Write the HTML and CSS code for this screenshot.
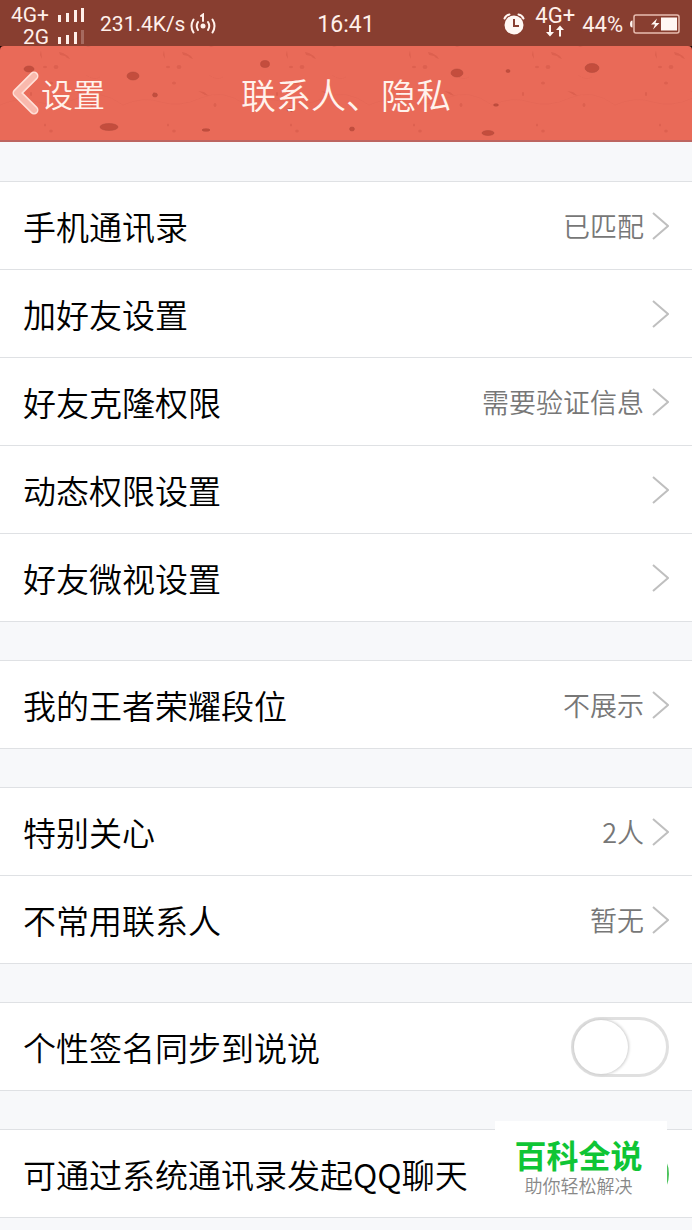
FILE: index.html
```
<!DOCTYPE html>
<html lang="zh-CN">
<head>
    <meta charset="UTF-8">
    <meta name="viewport" content="width=device-width, initial-scale=1.0">
    <title>联系人、隐私</title>
    <link rel="stylesheet" href="styles.css">
</head>
<body>
    <!-- Status bar -->
    <div class="status-bar">
        <div class="status-left">
            <div class="sims">
                <div class="sim">4G+
                    <svg class="signal" width="26" height="14" viewBox="0 0 26 14" fill="#fff0ea"><path d="M0 7h3v7H0zM8 5h3v9H8zM16 2h3v12h-3zM23 0h3v14h-3z"/></svg>
                </div>
                <div class="sim">2G
                    <svg class="signal" width="26" height="14" viewBox="0 0 26 14" fill="#fff0ea"><path d="M0 7h3v7H0zM8 5h3v9H8zM16 2h3v12h-3z"/><path opacity=".25" d="M23 0h3v14h-3z"/></svg>
                </div>
            </div>
            <span class="speed">231.4K/s</span>
            <svg class="hotspot" width="26" height="22" viewBox="0 0 26 22" fill="none" stroke="#fff0ea" stroke-width="2" stroke-linecap="round">
                <circle cx="13" cy="13" r="2.500" fill="#fff0ea" stroke="none"/>
                <path d="M11 3l2-1.500V8M8 9q-2.500 4 0 8M18 9q2.500 4 0 8M3.500 6.500q-4 6.500 0 13M22.500 6.500q4 6.500 0 13"/>
            </svg>
        </div>
        <span class="clock">16:41</span>
        <div class="status-right">
            <svg class="alarm" width="22" height="22" viewBox="0 0 22 22">
                <circle cx="11" cy="12" r="9.500" fill="#fff7f3"/>
                <path d="M1.500 5.500Q3 2 6.500 1.500M20.500 5.500Q19 2 15.500 1.500" fill="none" stroke="#fff7f3" stroke-width="2" stroke-linecap="round"/>
                <path d="M11 6v7h5" fill="none" stroke="#883e30" stroke-width="2"/>
            </svg>
            <div class="data">4G+
                <svg width="18" height="12" viewBox="0 0 18 12" fill="#fff7f3"><path d="M3 0h2v7h3l-4 4.500L0 7h3zM13 11.500h2V5h3l-4-4.500L10 5h3z"/></svg>
            </div>
            <span class="percent">44%</span>
            <svg class="battery" width="52" height="20" viewBox="0 0 52 20">
                <path d="M3.500 6.500Q1 6.500 1 10t2.500 3.500z" fill="#fff7f3"/>
                <rect x="5" y="1" width="45" height="18" rx="2" fill="none" stroke="#e8bdb0" stroke-width="1.500"/>
                <rect x="32" y="3.500" width="16" height="13" fill="#fff7f3"/>
                <path d="M28 4.500l-6 6h4l-2 5 6.500-6.500h-4z" fill="#fff7f3"/>
            </svg>
        </div>
    </div>

    <!-- Title bar -->
    <div class="title-wrap">
        <header class="title-bar">
            <svg class="texture" viewBox="0 0 692 96" preserveAspectRatio="xMidYMid slice" aria-hidden="true">
                <defs>
                    <pattern id="specks" width="123" height="96" patternUnits="userSpaceOnUse">
                        <g fill="#c94f3f" opacity=".4">
                            <ellipse cx="56" cy="22" rx="2.500" ry="2"/>
                            <ellipse cx="45" cy="22" rx="2" ry="1.200"/>
                            <ellipse cx="51" cy="38" rx="2" ry="1.500"/>
                            <ellipse cx="31" cy="49" rx="1.200" ry="2"/>
                            <ellipse cx="92" cy="60" rx="1.500" ry="2"/>
                            <ellipse cx="51" cy="86" rx="1.800" ry="1.500"/>
                            <ellipse cx="45" cy="80" rx="1" ry="1.500"/>
                            <path d="M59 7l4 1 5 3 2 3-3-1-2-2-5-1zM75 46l6 1 5 4-4-1-5-3zM86 1l8-1-6 2zM41 5l1 9-2-4z"/>
                        </g>
                        <path d="M0 60q20-9 38-3t40-4 45 7M86 30q8 6 14 2" fill="none" stroke="#d95b4a" opacity=".2"/>
                    </pattern>
                </defs>
                <rect width="692" height="96" fill="url(#specks)"/>
                <g fill="#c44d3d" stroke="#b04a3b" stroke-opacity=".5">
                    <ellipse cx="29" cy="24" rx="5" ry="3"/>
                    <ellipse cx="133" cy="31" rx="6" ry="4"/>
                    <ellipse cx="155" cy="50" rx="2.500" ry="2"/>
                    <ellipse cx="109" cy="82" rx="9" ry="3.500"/>
                    <ellipse cx="206" cy="85" rx="4" ry="1.300"/>
                    <ellipse cx="265" cy="19" rx="4.500" ry="3.500"/>
                    <ellipse cx="290" cy="65" rx="3" ry="1.500"/>
                    <ellipse cx="352" cy="84" rx="2.500" ry="2"/>
                    <ellipse cx="457" cy="28" rx="6" ry="4"/>
                    <ellipse cx="508" cy="26" rx="2" ry="1.500"/>
                    <ellipse cx="592" cy="23" rx="7" ry="4.500"/>
                    <ellipse cx="496" cy="60" rx="2.500" ry="1.200"/>
                    <ellipse cx="488" cy="88" rx="6" ry="2.500"/>
                </g>
            </svg>
            <a class="back" href="#">
                <svg width="28" height="44" viewBox="0 0 28 44" fill="none" stroke-linecap="round" stroke-linejoin="round">
                    <path d="M23 5L6 22l17 17" stroke="#ffe0d8" stroke-width="9"/>
                    <path d="M23 5L6 22l17 17" stroke="#f9b9ad" stroke-width="6"/>
                </svg>
                设置
            </a>
            <h1>联系人、隐私</h1>
        </header>
    </div>

    <main class="settings">
        <section class="group">
            <a class="row" href="#">手机通讯录<span class="value">已匹配</span><svg class="chevron" viewBox="0 0 17 28"><path d="M1 1l15 13L1 27"/></svg></a>
            <a class="row" href="#">加好友设置<svg class="chevron" viewBox="0 0 17 28"><path d="M1 1l15 13L1 27"/></svg></a>
            <a class="row" href="#">好友克隆权限<span class="value">需要验证信息</span><svg class="chevron" viewBox="0 0 17 28"><path d="M1 1l15 13L1 27"/></svg></a>
            <a class="row" href="#">动态权限设置<svg class="chevron" viewBox="0 0 17 28"><path d="M1 1l15 13L1 27"/></svg></a>
            <a class="row" href="#">好友微视设置<svg class="chevron" viewBox="0 0 17 28"><path d="M1 1l15 13L1 27"/></svg></a>
        </section>

        <section class="group">
            <a class="row" href="#">我的王者荣耀段位<span class="value">不展示</span><svg class="chevron" viewBox="0 0 17 28"><path d="M1 1l15 13L1 27"/></svg></a>
        </section>

        <section class="group">
            <a class="row" href="#">特别关心<span class="value">2人</span><svg class="chevron" viewBox="0 0 17 28"><path d="M1 1l15 13L1 27"/></svg></a>
            <a class="row" href="#">不常用联系人<span class="value">暂无</span><svg class="chevron" viewBox="0 0 17 28"><path d="M1 1l15 13L1 27"/></svg></a>
        </section>

        <section class="group">
            <div class="row">
                <label for="sync-signature">个性签名同步到说说</label>
                <input class="switch" type="checkbox" id="sync-signature">
            </div>
        </section>

        <section class="group">
            <div class="row">
                <label for="qq-chat">可通过系统通讯录发起QQ聊天</label>
                <input class="switch" type="checkbox" id="qq-chat" checked>
                <div class="stamp">
                    <strong>百科全说</strong>
                    <span>助你轻松解决</span>
                </div>
            </div>
        </section>
    </main>
</body>
</html>
```
FILE: styles.css
```
* {
    box-sizing: border-box;
}

body {
    margin: 0;
    min-height: 100vh;
    background: #f7f8fa;
    color: #000;
    font-family: "Noto Sans CJK SC", sans-serif;
    font-weight: 350;
}

a {
    color: inherit;
    text-decoration: none;
}

svg {
    display: block;
    flex: none;
}

/* Status bar */
.status-bar {
    display: grid;
    grid-template-columns: 1fr auto 1fr;
    align-items: center;
    height: 46px;
    padding: 0 11px;
    background: #883e30;
    color: #fff0ea;
    font-family: Roboto, sans-serif;
    font-weight: 400;
    font-size: 22px;
}

.status-left,
.status-right {
    display: flex;
    align-items: center;
}

.status-right {
    justify-content: flex-end;
}

.sims {
    display: flex;
    flex-direction: column;
    align-items: flex-end;
    padding-top: 4px;
    margin-right: 16px;
}

.sim {
    display: flex;
    align-items: center;
    gap: 9px;
    height: 22px;
    font-size: 21px;
}

.speed {
    font-size: 21px;
}

.hotspot {
    margin-left: 5px;
}

.clock {
    font-size: 23px;
}

.alarm {
    margin-right: 10px;
}

.data {
    display: flex;
    flex-direction: column;
    align-items: center;
    margin-right: 7px;
    padding-bottom: 4px;
    font-size: 22px;
    line-height: 18px;
}

.battery {
    margin-left: 6px;
}

/* Title bar */
.title-wrap {
    background: linear-gradient(#1d0805 50%, #f7f8fa 50%);
}

.title-bar {
    position: relative;
    display: grid;
    grid-template-columns: 1fr auto 1fr;
    align-items: center;
    height: 96px;
    padding: 0 11px;
    overflow: hidden;
    border-bottom: 2px solid #bd6560;
    border-radius: 4px 4px 0 0;
    background: #e96a58;
    color: #fff2ec;
}

.texture {
    position: absolute;
    inset: 0;
    width: 100%;
    height: 100%;
}

.back,
.title-bar h1 {
    position: relative;
}

.back {
    display: flex;
    align-items: center;
    gap: 2px;
    font-size: 32px;
}

.title-bar h1 {
    margin: 0;
    font-size: 35px;
    font-weight: 350;
}

/* Settings list */
.settings {
    display: flex;
    flex-direction: column;
    gap: 38px;
    padding: 39px 0 11px;
}

.group {
    border-top: 1px solid #dfe1e4;
    background: #fff;
}

.row {
    position: relative;
    display: flex;
    align-items: center;
    height: 88px;
    padding: 0 23px;
    border-bottom: 1px solid #dfe1e4;
    font-size: 33px;
}

.value {
    margin-left: auto;
    color: #777;
    font-size: 27px;
}

.chevron {
    width: 17px;
    height: 28px;
    margin-left: auto;
    fill: none;
    stroke: #bfbfbf;
    stroke-width: 2;
}

.value + .chevron {
    margin-left: 8px;
}

.switch {
    appearance: none;
    width: 98px;
    height: 60px;
    margin: 0 0 0 auto;
    border: 3px solid #e0e0e0;
    border-radius: 30px;
    background: #fff;
}

.switch::before {
    content: "";
    display: block;
    width: 54px;
    height: 54px;
    border-radius: 50%;
    background: #fff;
    box-shadow: 0 0 3px 1px #ccc;
}

.switch:checked {
    border-color: #4cc35c;
    background: #4cc35c;
}

.switch:checked::before {
    margin-left: 38px;
    box-shadow: none;
}

/* Stamp over the last row */
.stamp {
    position: absolute;
    right: 25px;
    bottom: 12px;
    display: flex;
    flex-direction: column;
    align-items: center;
    width: 172px;
    padding: 14px 5px 8px 0;
    background: #fff;
}

.stamp strong {
    color: #0fc535;
    font-size: 32px;
    font-weight: 700;
    line-height: 38px;
}

.stamp span {
    color: #888;
    font-size: 18px;
    line-height: 24px;
}
```
